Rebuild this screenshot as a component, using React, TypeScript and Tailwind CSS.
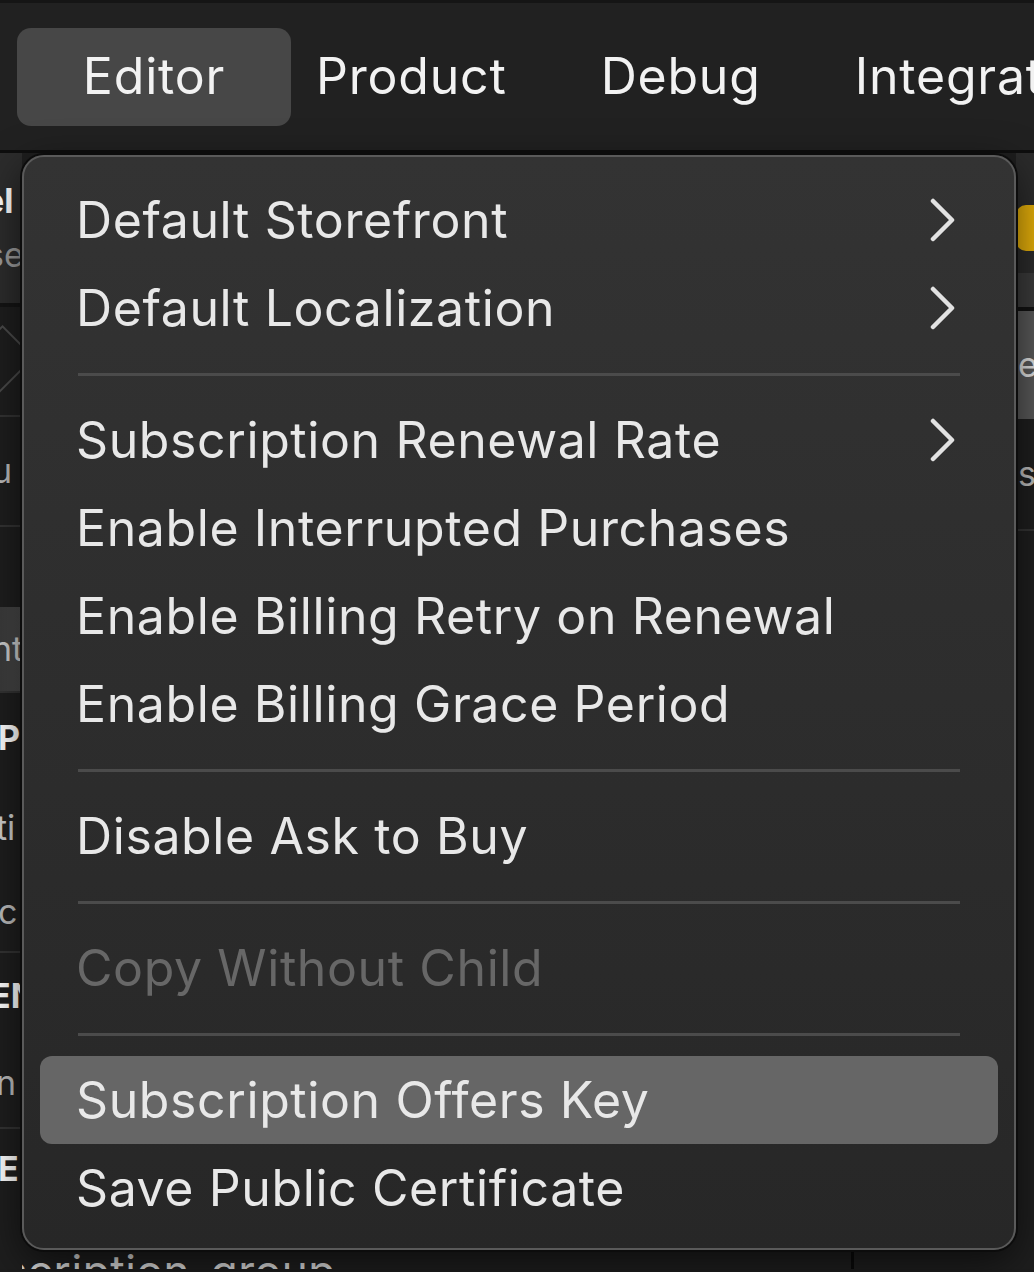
type Item = { label: string; sub?: boolean; disabled?: boolean; active?: boolean } | "sep";

const items: Item[] = [
	{ label: "Default Storefront", sub: true },
	{ label: "Default Localization", sub: true },
	"sep",
	{ label: "Subscription Renewal Rate", sub: true },
	{ label: "Enable Interrupted Purchases" },
	{ label: "Enable Billing Retry on Renewal" },
	{ label: "Enable Billing Grace Period" },
	"sep",
	{ label: "Disable Ask to Buy" },
	"sep",
	{ label: "Copy Without Child", disabled: true },
	"sep",
	{ label: "Subscription Offers Key", active: true },
	{ label: "Save Public Certificate" },
];

function Chevron() {
	return (
		<svg fill="none" height="44" viewBox="0 0 28 44" width="28">
			<polyline
				points="4,3 23,22 4,41"
				stroke="#e2e2e2"
				strokeLinecap="round"
				strokeLinejoin="round"
				strokeWidth="4.5"
			/>
		</svg>
	);
}

function MenuRow({ item }: { item: Exclude<Item, "sep"> }) {
	return (
		<div
			className={`mx-[16px] flex h-[88px] items-center justify-between rounded-[12px] pr-[41px] pl-[36px] ${
				item.active ? "bg-[#666666]" : ""
			}`}
		>
			<span
				className={`text-[50px] leading-none tracking-[0.6px] ${
					item.disabled ? "text-[#676767]" : "text-[#e8e8e8]"
				}`}
			>
				{item.label}
			</span>
			{item.sub && <Chevron />}
		</div>
	);
}

function Separator() {
	return (
		<div className="flex h-[44px] items-center px-[54px]">
			<div className="h-[3px] w-full bg-[#4b4b4b]" />
		</div>
	);
}

export default function App() {
	return (
		<div
			className="relative h-[1272px] w-[1034px] overflow-hidden bg-[#1d1d1d] text-white"
			style={{ fontFamily: "Inter, 'Noto Sans', sans-serif" }}
		>
			{/* menu bar */}
			<header className="flex h-[153px] items-center border-t-[3px] border-b-[3px] border-t-[#151515] border-b-[#0e0e0e] bg-[#212121] pl-[17px] text-[50px] tracking-[0.8px] whitespace-nowrap text-[#f2f2f2]">
				<div className="flex h-[98px] w-[274px] shrink-0 items-center justify-center rounded-[14px] bg-[#474747]">
					Editor
				</div>
				<div className="ml-[25px] shrink-0">Product</div>
				<div className="ml-[94px] shrink-0">Debug</div>
				<div className="ml-[94px] shrink-0">Integrations</div>
			</header>

			{/* window content behind the menu */}
			<div className="flex h-[1116px]">
				<aside className="flex w-[22px] flex-col overflow-hidden text-[34px] leading-none whitespace-nowrap">
					<div className="flex h-[150px] flex-col justify-center gap-[20px] bg-[#2c2c2c]">
						<span className="-ml-[16px] font-bold text-white">el</span>
						<span className="-ml-[14px] text-[#9a9a9a]">se</span>
					</div>
					<div className="h-[4px] bg-[#141414]" />
					<div className="flex h-[110px] items-center border-b-2 border-[#333] bg-[#1e1e1e]">
						<div className="ml-[-24px] h-[56px] w-[56px] rotate-45 border-2 border-[#4a4a4a]" />
					</div>
					<div className="flex h-[110px] items-center border-b-2 border-[#333] bg-[#1e1e1e]">
						<span className="-ml-[8px] text-[#bbbbbb]">u</span>
					</div>
					<div className="h-[80px] bg-[#1e1e1e]" />
					<div className="flex h-[84px] items-center bg-gradient-to-r from-[#3a3a3a] to-[#4a4a4a]">
						<span className="-ml-[8px] text-[#cccccc]">nt</span>
					</div>
					<div className="h-[2px] bg-[#333]" />
					<div className="flex h-[90px] items-center bg-[#1e1e1e]">
						<span className="-ml-[2px] font-bold text-white">P</span>
					</div>
					<div className="flex h-[90px] items-center bg-[#1e1e1e]">
						<span className="-ml-[4px] text-[#cccccc]">ti</span>
					</div>
					<div className="flex h-[80px] items-center border-b-2 border-[#333] bg-[#1e1e1e]">
						<span className="-ml-[2px] text-[#bbbbbb]">c</span>
					</div>
					<div className="flex h-[86px] items-center bg-[#1e1e1e]">
						<span className="-ml-[10px] font-bold text-white">EN</span>
					</div>
					<div className="flex h-[90px] items-center border-b-2 border-[#333] bg-[#1e1e1e]">
						<span className="-ml-[4px] text-[#bbbbbb]">n</span>
					</div>
					<div className="flex h-[80px] items-center bg-[#1e1e1e]">
						<span className="-ml-[2px] font-bold text-white">E</span>
					</div>
					<div className="flex-1 bg-[#1e1e1e]" />
				</aside>
				<main className="flex flex-1 flex-col justify-end bg-[#1e1e1e]">
					<div className="flex h-[22px] overflow-hidden">
						<span className="mt-[2px] -ml-[96px] text-[44px] leading-none tracking-[0.6px] whitespace-nowrap text-[#d8d8d8]">
							subscription_group
						</span>
						<div className="mr-[162px] ml-auto w-[3px] bg-[#0a0a0a]" />
					</div>
				</main>
				<aside className="flex w-[18px] flex-col overflow-hidden text-[34px] leading-none">
					<div className="h-[30px] bg-[#2b2b2b]" />
					<div className="flex h-[90px] items-center bg-[#2b2b2b]">
						<div className="h-[46px] w-full rounded-l-[10px] bg-[#e2ad0a]" />
					</div>
					<div className="h-[34px] bg-[#3a3a3a]" />
					<div className="h-[4px] bg-[#121212]" />
					<div className="flex h-[108px] items-center bg-[#575757] pl-[2px] text-[#dddddd]">e/</div>
					<div className="flex h-[112px] items-center border-b-2 border-[#333] bg-[#1e1e1e] pl-[2px] text-[#bbbbbb]">
						s
					</div>
					<div className="flex-1 bg-[#1e1e1e]" />
				</aside>
			</div>

			{/* Editor dropdown */}
			<div className="absolute top-[155px] left-[22px] w-[994px] rounded-[22px] border-2 border-[#5a5a5a] bg-gradient-to-b from-[#333333] to-[#272727] pt-[19px] pb-[16px] shadow-[0_0_0_2px_#0c0c0c,0_12px_40px_rgba(0,0,0,0.6)]">
				{items.map((item, i) =>
					item === "sep" ? <Separator key={i} /> : <MenuRow item={item} key={i} />
				)}
			</div>
		</div>
	);
}
